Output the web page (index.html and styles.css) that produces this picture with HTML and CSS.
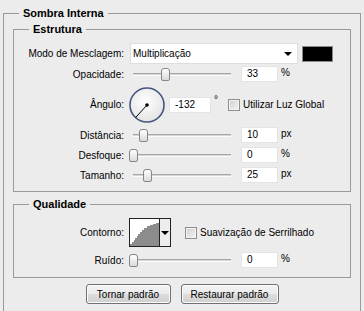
FILE: index.html
```html
<!DOCTYPE html>
<html lang="pt">
<head>
    <meta charset="UTF-8">
    <title>Sombra Interna</title>
    <link rel="stylesheet" href="styles.css">
</head>
<body>
    <fieldset class="panel">
        <legend>Sombra Interna</legend>

        <!-- Estrutura -->
        <fieldset class="group">
            <legend>Estrutura</legend>
            <div class="row row-mode">
                <label class="lbl">Modo de Mesclagem:</label>
                <div class="select"><span>Multiplicação</span><span class="caret"></span></div>
                <div class="swatch"></div>
            </div>
            <div class="row">
                <label class="lbl">Opacidade:</label>
                <div class="slider"><div class="track"></div><div class="thumb" style="left: 33px"></div></div>
                <div class="field">33</div>
                <span class="unit">%</span>
            </div>
            <div class="row row-angle">
                <label class="lbl">Ângulo:</label>
                <svg class="dial" width="36" height="36" viewBox="0 0 36 36">
                    <defs>
                        <radialGradient id="dialFill" cx="45%" cy="40%" r="60%">
                            <stop offset="0" stop-color="#ffffff"/>
                            <stop offset="1" stop-color="#e4e4e4"/>
                        </radialGradient>
                    </defs>
                    <circle cx="18" cy="18" r="17" fill="url(#dialFill)" stroke="#44557f" stroke-width="1.6"/>
                    <line x1="18" y1="18" x2="6.6" y2="30.6" stroke="#000" stroke-width="1"/>
                    <circle cx="18" cy="18" r="1.8" fill="#000"/>
                </svg>
                <div class="field field-angle">-132</div>
                <span class="unit">°</span>
                <label class="check"><span class="box"></span>Utilizar Luz Global</label>
            </div>
            <div class="row">
                <label class="lbl">Distância:</label>
                <div class="slider"><div class="track"></div><div class="thumb" style="left: 11px"></div></div>
                <div class="field">10</div>
                <span class="unit">px</span>
            </div>
            <div class="row">
                <label class="lbl">Desfoque:</label>
                <div class="slider"><div class="track"></div><div class="thumb" style="left: 1px"></div></div>
                <div class="field">0</div>
                <span class="unit">%</span>
            </div>
            <div class="row">
                <label class="lbl">Tamanho:</label>
                <div class="slider"><div class="track"></div><div class="thumb" style="left: 15px"></div></div>
                <div class="field">25</div>
                <span class="unit">px</span>
            </div>
        </fieldset>

        <!-- Qualidade -->
        <fieldset class="group group-quality">
            <legend>Qualidade</legend>
            <div class="row row-contour">
                <label class="lbl">Contorno:</label>
                <div class="contour">
                    <svg class="curve" width="29" height="27" viewBox="0 0 29 27" shape-rendering="crispEdges">
                        <polygon fill="#8c8c8c" points="0,27 0,25 2,25 2,23 4,23 4,21 5,21 5,19 7,19 7,17 8,17 8,15 10,15 10,13 12,13 12,11 14,11 14,9 17,9 17,7 20,7 20,6 23,6 23,5 26,5 26,4 29,4 29,27"/>
                    </svg>
                    <div class="drop"><span class="caret"></span></div>
                </div>
                <label class="check check-aa"><span class="box"></span>Suavização de Serrilhado</label>
            </div>
            <div class="row row-noise">
                <label class="lbl">Ruído:</label>
                <div class="slider"><div class="track"></div><div class="thumb" style="left: 1px"></div></div>
                <div class="field">0</div>
                <span class="unit">%</span>
            </div>
        </fieldset>

        <div class="buttons">
            <button class="btn btn-default">Tornar padrão</button>
            <button class="btn btn-reset">Restaurar padrão</button>
        </div>
    </fieldset>
</body>
</html>
```

FILE: styles.css
```css
/* General styling */
* {
    box-sizing: border-box;
}
body {
    margin: 0;
    padding: 6px 3px 0;
    background: #ececec;
    font-family: "Liberation Sans", Arial, sans-serif;
    font-size: 10px;
    color: #000;
    overflow: hidden;
}
fieldset {
    margin: 0;
    min-width: 0;
    border: 1px solid #9a9a9a;
}
legend {
    padding: 0 4px;
    font-size: 11px;
    font-weight: bold;
    line-height: 14px;
}
.panel {
    padding: 2px 9px 30px;
}
.panel > legend {
    margin-left: 6px;
}
.group {
    padding: 7px 8px 6px;
}
.group > legend {
    margin-left: 7px;
}
.group-quality {
    margin-top: 5px;
    padding-bottom: 7px;
}

/* Rows */
.row {
    display: flex;
    align-items: center;
    height: 20px;
}
.row-mode {
    height: 21px;
}
.row-angle {
    height: 41px;
}
.row-contour {
    height: 29px;
}
.row-noise {
    margin-top: 3px;
}
.lbl {
    flex: 0 0 102px;
    margin-right: 4px;
    text-align: right;
    white-space: nowrap;
}

/* Blend mode select */
.select {
    position: relative;
    display: flex;
    align-items: center;
    margin-left: 2px;
    width: 168px;
    height: 21px;
    padding-left: 2px;
    background: #fff;
    border: 1px solid #dedede;
}
.caret {
    width: 0;
    height: 0;
    border-left: 4px solid transparent;
    border-right: 4px solid transparent;
    border-top: 4px solid #000;
}
.select .caret {
    position: absolute;
    right: 5px;
    top: 8px;
}
.swatch {
    margin-left: 4px;
    width: 31px;
    height: 16px;
    background: #000;
    border: 1px solid #8a8a8a;
}

/* Sliders */
.slider {
    position: relative;
    width: 110px;
    height: 20px;
}
.track {
    position: absolute;
    left: 5px;
    top: 9px;
    width: 98px;
    height: 3px;
    border-top: 1px solid #a6a6a6;
    border-bottom: 1px solid #fdfdfd;
    background: #d6d6d6;
}
.thumb {
    position: absolute;
    top: 4px;
    width: 9px;
    height: 13px;
    border: 1px solid #868686;
    border-radius: 3px 3px 2px 2px;
    background: linear-gradient(#ffffff, #dadada);
}

/* Number fields */
.field {
    margin-left: 3px;
    width: 37px;
    height: 16px;
    padding-left: 5px;
    line-height: 14px;
    background: #fff;
    border: 1px solid #e4e4e4;
}
.field-angle {
    margin-left: 4px;
    width: 42px;
}
.unit {
    align-self: flex-start;
    margin-top: 3px;
    margin-left: 3px;
    line-height: 12px;
}
.row-angle .unit {
    margin-top: 10px;
}

/* Angle dial */
.dial {
    margin-left: 1px;
}

/* Checkboxes */
.check {
    display: flex;
    align-items: center;
    margin-left: 10px;
    white-space: nowrap;
}
.box {
    width: 12px;
    height: 12px;
    margin-right: 3px;
    border: 1px solid #8e8e8e;
    box-shadow: inset 0 0 0 1px #f4f4f4;
    background: linear-gradient(135deg, #cfcfcf, #f4f4f4);
}
.check-aa {
    margin-left: 14px;
}

/* Contour picker */
.contour {
    display: flex;
    margin-left: 1px;
    width: 42px;
    height: 29px;
    border: 1px solid #222;
}
.curve {
    display: block;
    background: #fff;
}
.drop {
    display: flex;
    justify-content: center;
    padding-top: 12px;
    flex: 1;
    background: #ededed;
    border-left: 1px solid #222;
}

/* Buttons */
.buttons {
    display: flex;
    justify-content: center;
    gap: 10px;
    margin-top: 6px;
}
.btn {
    height: 20px;
    padding: 0;
    font-family: inherit;
    font-size: 10px;
    color: #000;
    border: 1px solid #707070;
    border-radius: 3px;
    background: linear-gradient(#f3f3f3 0%, #ebebeb 50%, #dddddd 51%, #d0d0d0 100%);
    box-shadow: inset 0 0 0 1px #fcfcfc;
}
.btn-default {
    width: 85px;
}
.btn-reset {
    width: 98px;
}
```
